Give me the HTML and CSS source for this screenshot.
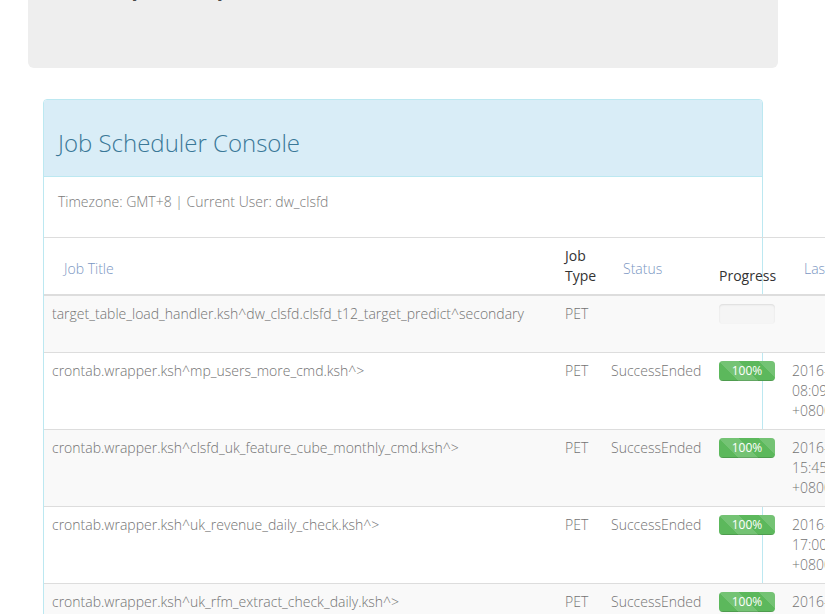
FILE: index.html
```html
<!DOCTYPE html>
<html lang="en">
<head>
<meta charset="utf-8">
<title>Job Scheduler Console</title>
<link rel="stylesheet" href="styles.css">
</head>
<body>
<div class="page">
  <div class="container">
    <div class="jumbotron">
      <p class="lead">Easily handle your scheduled tasks</p>
    </div>
    <div class="panel">
      <div class="panel-heading">
        <h2 class="panel-title">Job Scheduler Console</h2>
      </div>
      <div class="panel-body">
        <p>Timezone: GMT+8 | Current User: dw_clsfd</p>
      </div>
      <table class="table">
        <thead>
          <tr>
            <th class="c-title"><span class="sort">Job Title</span></th>
            <th class="c-type">Job Type</th>
            <th class="c-status"><span class="sort">Status</span></th>
            <th class="c-prog">Progress</th>
            <th class="c-date"><span class="sort">Last Updated</span></th>
            <th class="c-more"><span class="sort">Actions</span></th>
          </tr>
        </thead>
        <tbody>
          <tr class="odd">
            <td>target_table_load_handler.ksh^dw_clsfd.clsfd_t12_target_predict^secondary</td>
            <td>PET</td>
            <td></td>
            <td><div class="progress"></div></td>
            <td></td>
            <td></td>
          </tr>
          <tr>
            <td>crontab.wrapper.ksh^mp_users_more_cmd.ksh^&gt;</td>
            <td>PET</td>
            <td>SuccessEnded</td>
            <td><div class="progress"><div class="bar">100%</div></div></td>
            <td>2016-04-12 08:09:31 +0800</td>
            <td></td>
          </tr>
          <tr class="odd">
            <td>crontab.wrapper.ksh^clsfd_uk_feature_cube_monthly_cmd.ksh^&gt;</td>
            <td>PET</td>
            <td>SuccessEnded</td>
            <td><div class="progress"><div class="bar">100%</div></div></td>
            <td>2016-04-11 15:45:02 +0800</td>
            <td></td>
          </tr>
          <tr>
            <td>crontab.wrapper.ksh^uk_revenue_daily_check.ksh^&gt;</td>
            <td>PET</td>
            <td>SuccessEnded</td>
            <td><div class="progress"><div class="bar">100%</div></div></td>
            <td>2016-04-11 17:00:14 +0800</td>
            <td></td>
          </tr>
          <tr class="odd">
            <td>crontab.wrapper.ksh^uk_rfm_extract_check_daily.ksh^&gt;</td>
            <td>PET</td>
            <td>SuccessEnded</td>
            <td><div class="progress"><div class="bar">100%</div></div></td>
            <td>2016-04-11 06:30:40 +0800</td>
            <td></td>
          </tr>
        </tbody>
      </table>
    </div>
  </div>
</div>
</body>
</html>
```
FILE: styles.css
```css
html, body {
  margin: 0;
  padding: 0;
  overflow: hidden;
  background: #fff;
}
body {
  font-family: "Open Sans", "Liberation Sans", sans-serif;
  font-weight: 300;
  font-size: 14px;
  line-height: 20px;
  color: #737373;
}
.page {
  width: 825px;
  height: 614px;
  overflow: hidden;
}
.container {
  width: 750px;
  margin-left: 28px;
}
.jumbotron {
  background: #eee;
  border-radius: 0 0 6px 6px;
  height: 68px;
  padding: 0 60px 0 63px;
  margin: 0 0 31px 0;
  overflow: hidden;
}
.lead {
  margin: -24px 0 0;
  font-size: 21px;
  line-height: 24px;
  color: #333;
  white-space: nowrap;
}
.panel {
  margin: 0 15px;
  border: 1px solid #bce8f1;
  border-radius: 4px;
  background: #fff;
}
.panel-heading {
  background: #d9edf7;
  border-bottom: 1px solid #bce8f1;
  border-radius: 3px 3px 0 0;
  padding: 10px 14px;
}
.panel-title {
  margin: 19px 0 9px;
  font-size: 24px;
  line-height: 28px;
  font-weight: 300;
  color: #3a7898;
}
.panel-body {
  padding: 15px 14px;
}
.panel-body p {
  margin: 0 0 10px;
  color: #7a7a7a;
}
.table {
  border-collapse: collapse;
  border-spacing: 0;
  table-layout: fixed;
  width: 1000px;
  border-top: 1px solid #ddd;
}
.table th, .table td {
  padding: 8px;
  text-align: left;
  vertical-align: top;
}
.table th {
  vertical-align: bottom;
  font-weight: 400;
  color: #333;
  border-bottom: 2px solid #ddd;
}
.table td {
  border-top: 1px solid #ddd;
}
.table tbody tr:first-child td {
  border-top: 0;
}
.table tr.odd td {
  background: #f9f9f9;
}
.sort {
  display: inline-block;
  padding: 0 0 7px 12px;
  color: #7a96c2;
  font-weight: 300;
  white-space: nowrap;
}
.c-title { width: 497px; }
.c-type { width: 30px; }
.c-status { width: 92px; }
.c-prog { width: 57px; }
.c-date { width: 80px; }
.progress {
  height: 20px;
  margin-bottom: 20px;
  background: #f5f5f5;
  border-radius: 4px;
  box-shadow: inset 0 1px 2px rgba(0,0,0,.1);
  overflow: hidden;
  width: 56px;
}
.bar {
  height: 20px;
  width: 100%;
  background-color: #5cb85c;
  background-image: linear-gradient(45deg, rgba(255,255,255,.15) 25%, transparent 25%, transparent 50%, rgba(255,255,255,.15) 50%, rgba(255,255,255,.15) 75%, transparent 75%, transparent);
  background-size: 40px 40px;
  box-shadow: inset 0 -1px 0 rgba(0,0,0,.15);
  color: #fff;
  font-size: 12px;
  line-height: 20px;
  text-align: center;
  font-weight: 400;
}
```
